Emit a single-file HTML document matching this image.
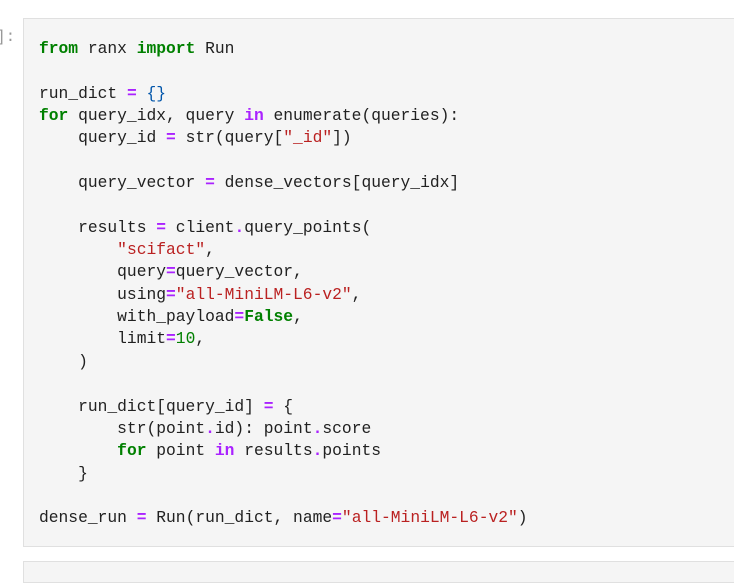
<!DOCTYPE html>
<html><head><style>
html,body{margin:0;padding:0;background:#fff;width:734px;height:564px;overflow:hidden}
.p{position:absolute;left:-4px;top:28px;font:16px "Liberation Mono",monospace;color:#999}
.box{position:absolute;left:23px;top:18px;width:720px;height:529px;background:#f5f5f5;border:1px solid #e0e0e0;box-sizing:border-box}
.box2{position:absolute;left:23px;top:561px;width:720px;height:20px;background:#f5f5f5;border:1px solid #e0e0e0}
pre{position:absolute;left:39px;top:38px;margin:0;font:16.3px/22.35px "Liberation Mono",monospace;color:#212121}
.k{color:#008000;font-weight:bold}.o{color:#aa22ff;font-weight:bold}.s{color:#ba2121}.b{color:#0055aa}.n{color:#008000}
</style></head><body>
<div class="p">]:</div>
<div class="box"></div><div class="box2"></div>
<pre><span class="k">from</span> ranx <span class="k">import</span> Run

run_dict <span class="o">=</span> <span class="b">{}</span>
<span class="k">for</span> query_idx, query <span class="o">in</span> enumerate(queries):
    query_id <span class="o">=</span> str(query[<span class="s">"_id"</span>])

    query_vector <span class="o">=</span> dense_vectors[query_idx]

    results <span class="o">=</span> client<span class="o">.</span>query_points(
        <span class="s">"scifact"</span>,
        query<span class="o">=</span>query_vector,
        using<span class="o">=</span><span class="s">"all-MiniLM-L6-v2"</span>,
        with_payload<span class="o">=</span><span class="k">False</span>,
        limit<span class="o">=</span><span class="n">10</span>,
    )

    run_dict[query_id] <span class="o">=</span> {
        str(point<span class="o">.</span>id): point<span class="o">.</span>score
        <span class="k">for</span> point <span class="o">in</span> results<span class="o">.</span>points
    }

dense_run <span class="o">=</span> Run(run_dict, name<span class="o">=</span><span class="s">"all-MiniLM-L6-v2"</span>)</pre>
</body></html>
